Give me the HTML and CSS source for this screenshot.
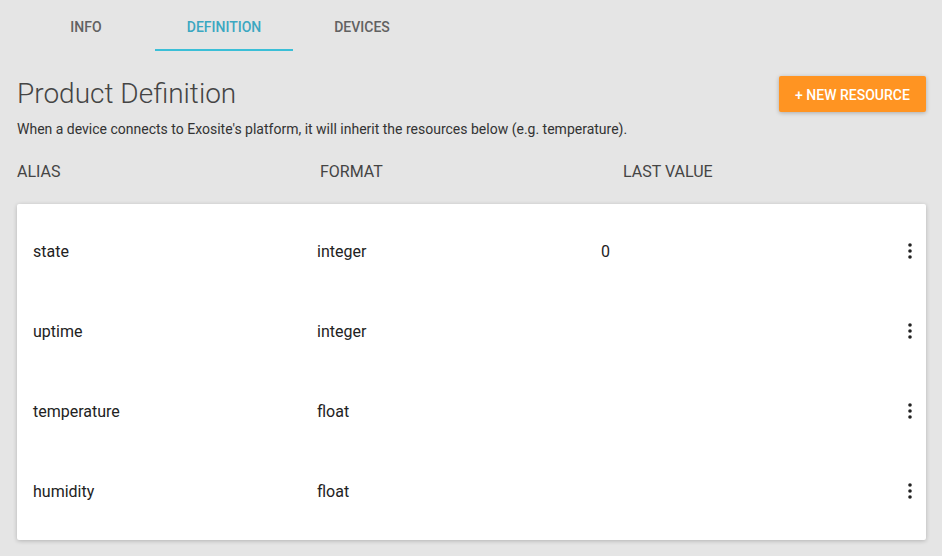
FILE: index.html
```html
<!DOCTYPE html>
<html>
<head>
<meta charset="utf-8">
<link rel="stylesheet" href="styles.css">
</head>
<body>
<div class="page">
  <nav class="tabs">
    <div class="tab">INFO</div>
    <div class="tab active">DEFINITION</div>
    <div class="tab">DEVICES</div>
  </nav>
  <header class="head">
    <div class="head-text">
      <h1 class="title">Product Definition</h1>
      <p class="desc">When a device connects to Exosite's platform, it will inherit the resources below (e.g. temperature).</p>
    </div>
    <button class="btn">+ NEW RESOURCE</button>
  </header>
  <div class="cols">
    <div class="col">ALIAS</div>
    <div class="col">FORMAT</div>
    <div class="col">LAST VALUE</div>
  </div>
  <div class="card">
    <div class="row"><div class="cell">state</div><div class="cell">integer</div><div class="cell">0</div><div class="more"><svg width="4" height="16" viewBox="0 0 4 16"><circle cx="2" cy="2" r="1.8"/><circle cx="2" cy="8" r="1.8"/><circle cx="2" cy="14" r="1.8"/></svg></div></div>
    <div class="row"><div class="cell">uptime</div><div class="cell">integer</div><div class="cell"></div><div class="more"><svg width="4" height="16" viewBox="0 0 4 16"><circle cx="2" cy="2" r="1.8"/><circle cx="2" cy="8" r="1.8"/><circle cx="2" cy="14" r="1.8"/></svg></div></div>
    <div class="row"><div class="cell">temperature</div><div class="cell">float</div><div class="cell"></div><div class="more"><svg width="4" height="16" viewBox="0 0 4 16"><circle cx="2" cy="2" r="1.8"/><circle cx="2" cy="8" r="1.8"/><circle cx="2" cy="14" r="1.8"/></svg></div></div>
    <div class="row"><div class="cell">humidity</div><div class="cell">float</div><div class="cell"></div><div class="more"><svg width="4" height="16" viewBox="0 0 4 16"><circle cx="2" cy="2" r="1.8"/><circle cx="2" cy="8" r="1.8"/><circle cx="2" cy="14" r="1.8"/></svg></div></div>
  </div>
</div>
</body>
</html>
```

FILE: styles.css
```css
html, body {
  margin: 0;
  padding: 0;
  background: #e5e5e5;
  font-family: Roboto, "Liberation Sans", sans-serif;
}
.page {
  padding: 0 16px 0 17px;
  height: 556px;
  box-sizing: border-box;
}
.tabs {
  display: flex;
  height: 52px;
}
.tab {
  width: 138px;
  text-align: center;
  font-size: 14px;
  font-weight: 500;
  color: #616161;
  padding-top: 19px;
  box-sizing: border-box;
  height: 51px;
}
.tab.active {
  color: #3ba7c1;
  border-bottom: 2px solid #3bbfd7;
}
.head {
  display: flex;
  justify-content: space-between;
  align-items: flex-start;
  margin-top: 24px;
}
.head-text {
  padding-top: 1px;
}
.title {
  margin: 0;
  font-size: 28px;
  font-weight: 300;
  color: #444;
  line-height: 34px;
}
.desc {
  margin: 10px 0 0;
  font-size: 14px;
  color: #333;
  line-height: 17px;
}
.btn {
  background: #ff9422;
  color: #fff;
  border: none;
  border-radius: 2px;
  font-family: Roboto, "Liberation Sans", sans-serif;
  font-size: 14px;
  font-weight: 500;
  width: 147px;
  height: 36px;
  padding: 1px 0 0;
  box-shadow: 0 1px 4px rgba(0,0,0,0.25);
}
.cols {
  display: flex;
  margin-top: 24px;
  height: 28px;
}
.col {
  width: 303px;
  font-size: 16px;
  color: #444;
}
.card {
  margin-top: 14px;
  background: #fff;
  border-radius: 2px;
  box-shadow: 0 1px 4px rgba(0,0,0,0.22);
  padding: 7px 0 9px;
}
.row {
  display: flex;
  align-items: center;
  height: 80px;
  padding-left: 16px;
}
.cell {
  width: 284px;
  font-size: 16px;
  color: #222;
}
.more {
  margin-left: auto;
  margin-right: 14px;
  display: flex;
  fill: #222;
}
```
